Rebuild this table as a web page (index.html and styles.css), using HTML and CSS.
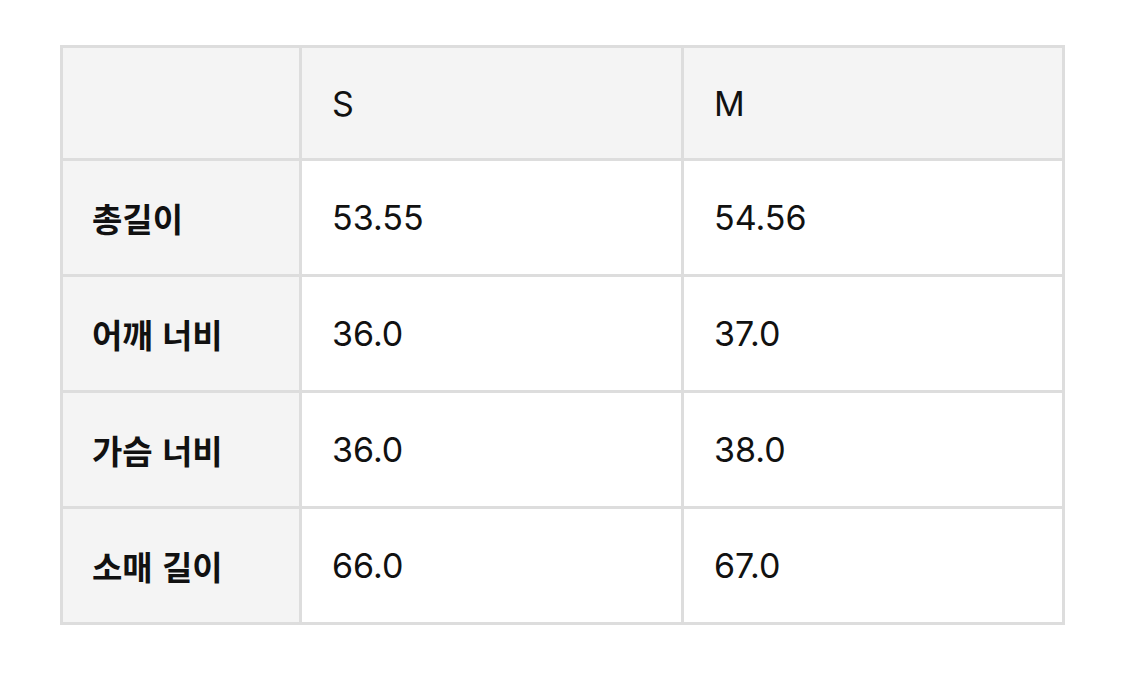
FILE: index.html
```html
<!DOCTYPE html>
<html lang="ko">
<head>
<meta charset="utf-8">
<title>사이즈 표</title>
<link rel="stylesheet" href="styles.css">
</head>
<body>
<div class="size-table">
  <div class="cell head"></div>
  <div class="cell head">S</div>
  <div class="cell head">M</div>

  <div class="cell label">총길이</div>
  <div class="cell">53.55</div>
  <div class="cell">54.56</div>

  <div class="cell label">어깨 너비</div>
  <div class="cell">36.0</div>
  <div class="cell">37.0</div>

  <div class="cell label">가슴 너비</div>
  <div class="cell">36.0</div>
  <div class="cell">38.0</div>

  <div class="cell label">소매 길이</div>
  <div class="cell">66.0</div>
  <div class="cell">67.0</div>
</div>
</body>
</html>
```

FILE: styles.css
```css
html, body {
  margin: 0;
  padding: 0;
  background: #ffffff;
}

body {
  padding: 45px 0 0 60px;
  font-family: Inter, "Noto Sans CJK KR", sans-serif;
  color: #111111;
}

.size-table {
  display: grid;
  grid-template-columns: 236px 379px 378px;
  grid-template-rows: 110px 113px 113px 113px 113px;
  gap: 3px;
  padding: 3px;
  width: 999px;
  background: #dddddd;
}

.cell {
  display: flex;
  align-items: center;
  padding-left: 30px;
  background: #ffffff;
  font-size: 34px;
  font-weight: 400;
  letter-spacing: 0;
}

.head {
  background: #f4f4f4;
}

.label {
  background: #f4f4f4;
  padding-left: 29px;
  font-family: "Noto Sans CJK KR", sans-serif;
  font-weight: 700;
  font-size: 33px;
  letter-spacing: 0;
}
```
